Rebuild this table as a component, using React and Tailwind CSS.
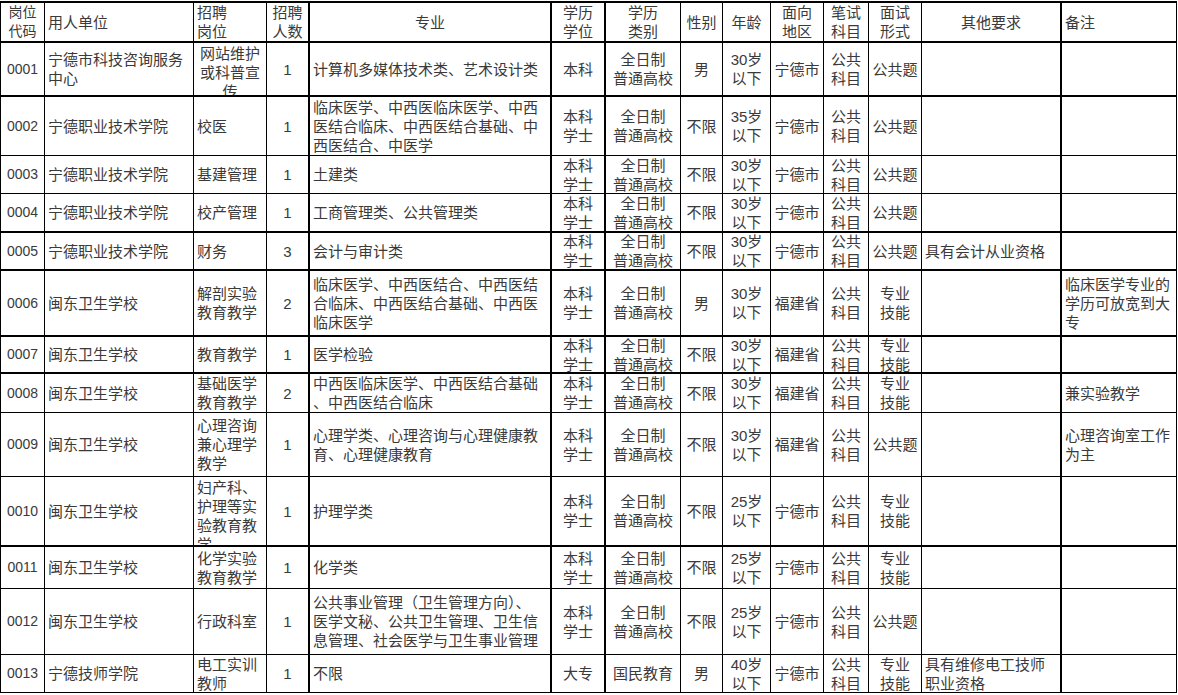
import React from 'react';

// column widths follow the sheet's ruling lines
const cols = [
  { w: 45, a: 'center' },
  { w: 149, a: 'left' },
  { w: 73, a: 'left' },
  { w: 43, a: 'center' },
  { w: 242, a: 'left' },
  { w: 54, a: 'center' },
  { w: 75, a: 'center' },
  { w: 42, a: 'center' },
  { w: 48, a: 'center' },
  { w: 53, a: 'center' },
  { w: 45, a: 'center' },
  { w: 53, a: 'center' },
  { w: 140, a: 'left' },
  { w: 115, a: 'left' },
];

const thickCols = [3, 4, 5, 12];

const header = {
  h: 42,
  thick: true,
  cells: ['岗位\n代码', '用人单位', '招聘\n岗位', '招聘\n人数', '专业', '学历\n学位', '学历\n类别', '性别', '年龄', '面向\n地区', '笔试\n科目', '面试\n形式', '其他要求', '备注'],
  align: { 2: 'left', 4: 'center', 12: 'center' },
};

const rows = [
  {
    h: 54, thick: true,
    cells: ['0001', '宁德市科技咨询服务\n中心', '网站维护\n或科普宣\n传', '1', '计算机多媒体技术类、艺术设计类', '本科', '全日制\n普通高校', '男', '30岁\n以下', '宁德市', '公共\n科目', '公共题', '', ''],
    align: { 2: 'center' }, top: { 2: true },
  },
  {
    h: 59,
    cells: ['0002', '宁德职业技术学院', '校医', '1', '临床医学、中西医临床医学、中西\n医结合临床、中西医结合基础、中\n西医结合、中医学', '本科\n学士', '全日制\n普通高校', '不限', '35岁\n以下', '宁德市', '公共\n科目', '公共题', '', ''],
  },
  {
    h: 38,
    cells: ['0003', '宁德职业技术学院', '基建管理', '1', '土建类', '本科\n学士', '全日制\n普通高校', '不限', '30岁\n以下', '宁德市', '公共\n科目', '公共题', '', ''],
  },
  {
    h: 39, thick: true,
    cells: ['0004', '宁德职业技术学院', '校产管理', '1', '工商管理类、公共管理类', '本科\n学士', '全日制\n普通高校', '不限', '30岁\n以下', '宁德市', '公共\n科目', '公共题', '', ''],
  },
  {
    h: 38, thick: true,
    cells: ['0005', '宁德职业技术学院', '财务', '3', '会计与审计类', '本科\n学士', '全日制\n普通高校', '不限', '30岁\n以下', '宁德市', '公共\n科目', '公共题', '具有会计从业资格', ''],
  },
  {
    h: 66, thick: true,
    cells: ['0006', '闽东卫生学校', '解剖实验\n教育教学', '2', '临床医学、中西医结合、中西医结\n合临床、中西医结合基础、中西医\n临床医学', '本科\n学士', '全日制\n普通高校', '男', '30岁\n以下', '福建省', '公共\n科目', '专业\n技能', '', '临床医学专业的\n学历可放宽到大\n专'],
  },
  {
    h: 37, thick: true,
    cells: ['0007', '闽东卫生学校', '教育教学', '1', '医学检验', '本科\n学士', '全日制\n普通高校', '不限', '30岁\n以下', '福建省', '公共\n科目', '专业\n技能', '', ''],
  },
  {
    h: 39,
    cells: ['0008', '闽东卫生学校', '基础医学\n教育教学', '2', '中西医临床医学、中西医结合基础\n、中西医结合临床', '本科\n学士', '全日制\n普通高校', '不限', '30岁\n以下', '福建省', '公共\n科目', '专业\n技能', '', '兼实验教学'],
  },
  {
    h: 64,
    cells: ['0009', '闽东卫生学校', '心理咨询\n兼心理学\n教学', '1', '心理学类、心理咨询与心理健康教\n育、心理健康教育', '本科\n学士', '全日制\n普通高校', '不限', '30岁\n以下', '福建省', '公共\n科目', '公共题', '', '心理咨询室工作\n为主'],
  },
  {
    h: 70, thick: true,
    cells: ['0010', '闽东卫生学校', '妇产科、\n护理等实\n验教育教\n学', '1', '护理学类', '本科\n学士', '全日制\n普通高校', '不限', '25岁\n以下', '宁德市', '公共\n科目', '专业\n技能', '', ''],
    top: { 2: true },
  },
  {
    h: 42,
    cells: ['0011', '闽东卫生学校', '化学实验\n教育教学', '1', '化学类', '本科\n学士', '全日制\n普通高校', '不限', '25岁\n以下', '宁德市', '公共\n科目', '专业\n技能', '', ''],
  },
  {
    h: 66,
    cells: ['0012', '闽东卫生学校', '行政科室', '1', '公共事业管理（卫生管理方向）、\n医学文秘、公共卫生管理、卫生信\n息管理、社会医学与卫生事业管理', '本科\n学士', '全日制\n普通高校', '不限', '25岁\n以下', '宁德市', '公共\n科目', '公共题', '', ''],
  },
  {
    h: 38,
    cells: ['0013', '宁德技师学院', '电工实训\n教师', '1', '不限', '大专', '国民教育', '男', '40岁\n以下', '宁德市', '公共\n科目', '专业\n技能', '具有维修电工技师\n职业资格', ''],
  },
];

function Cell({ text, col, ci, align, top, thick, first }) {
  const a = align || col.a;
  return (
    <div
      className={[
        'flex overflow-hidden border-black px-[3px] whitespace-pre',
        thickCols.includes(ci) ? 'border-r-2' : 'border-r',
        thick ? 'border-b-2' : 'border-b',
        ci === 0 ? 'border-l' : '',
        first ? 'border-t-2' : '',
        top ? 'items-start pt-[1px]' : 'items-center',
        a === 'center' ? 'justify-center text-center' : 'justify-start text-left',
        ci === 0 ? 'text-[14px]' : '',
      ].join(' ')}
    >
      <span>{text}</span>
    </div>
  );
}

function Row({ row, first }) {
  return (
    <div className="grid grid-cols-[45px_149px_73px_43px_242px_54px_75px_42px_48px_53px_45px_53px_140px_115px]" style={{ height: row.h }}>
      {row.cells.map((t, ci) => (
        <Cell
          key={ci}
          text={t}
          col={cols[ci]}
          ci={ci}
          align={row.align && row.align[ci]}
          top={row.top && row.top[ci]}
          thick={row.thick}
          first={first}
        />
      ))}
    </div>
  );
}

export default function App() {
  return (
    <div className="w-[1178px] h-[695px] overflow-hidden bg-white pt-[1px] text-[#3a3a3a] text-[15px] leading-[19px] font-['Liberation_Sans','Noto_Sans_CJK_SC',sans-serif]">
      <Row row={header} first />
      {rows.map((r, i) => (
        <Row key={i} row={r} />
      ))}
    </div>
  );
}
